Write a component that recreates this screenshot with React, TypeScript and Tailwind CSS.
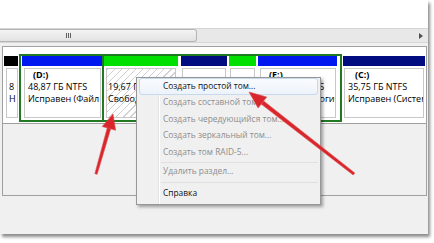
import React from "react";

const font = { fontFamily: '"Open Sans", "Noto Sans", sans-serif' };

function Bar({ color }: { color: string }) {
  return <div className={`h-[10px] ${color}`} />;
}

export default function App() {
  return (
    <div className="relative w-[434px] h-[243px] bg-white overflow-hidden text-[9px] text-black" style={font}>
      {/* window frame */}
      <div className="flex flex-col w-[428px] h-[234px] bg-[#f0f0f0] shadow-[2px_3px_3px_rgba(0,0,0,0.45)]">
        <div className="h-[28px] bg-white" />
        {/* scrollbar */}
        <div className="h-[15px] flex items-center bg-[#e8e8e8] border-y border-[#d6d6d6]">
          <div className="h-[13px] w-[197px] bg-gradient-to-b from-[#f4f4f4] to-[#e2e2e2] border border-l-0 border-[#b4b4b4] rounded-r-[3px] flex items-center pl-[66px] gap-[1px]">
            <div className="w-[1px] h-[5px] bg-[#606060]" />
            <div className="w-[1px] h-[5px] bg-[#606060]" />
            <div className="w-[1px] h-[5px] bg-[#606060]" />
          </div>
          <div className="flex-1" />
          <div className="w-0 h-0 border-y-[3px] border-y-transparent border-l-[4px] border-l-[#505050] mr-[5px]" />
        </div>
        <div className="h-[3px]" />
        {/* panel */}
        <div className="ml-[2px] w-[425px] h-[150px] border border-[#a0a0a0] flex flex-col">
          <div className="h-[77px] bg-white flex items-start pt-[7px] border-b border-[#a0a0a0]">
            {/* disk label column */}
            <div className="ml-[1px] w-[14px] pt-[2px] flex flex-col gap-[2px]">
              <Bar color="bg-black" />
              <div className="ml-[2px] h-[50px] border border-[#c8c8c8] bg-white pl-[2px] pt-[12px] leading-[12px] overflow-hidden">
                <div>8</div>
                <div>Н</div>
              </div>
            </div>
            {/* extended partition */}
            <div className="ml-[1px] w-[323px] h-[68px] border-2 border-[#217a21] flex">
              {/* D */}
              <div className="w-[81px] flex flex-col gap-[2px] pl-[1px]">
                <Bar color="bg-[#0018f0]" />
                <div className="ml-[2px] mr-[1px] h-[50px] border border-[#c8c8c8] bg-white pl-[3px] leading-[12px] whitespace-nowrap overflow-hidden">
                  <div className="pl-[5px] font-bold">(D:)</div>
                  <div>48,87 ГБ NTFS</div>
                  <div>Исправен (Файл и</div>
                </div>
              </div>
              <div className="w-[2px] h-full bg-[#217a21]" />
              {/* free */}
              <div className="w-[75px] flex flex-col gap-[2px]">
                <div className="h-[10px] w-[74px] bg-[#00e000]" />
                <div className="ml-[2px] w-[70px] h-[50px] border border-[#c8c8c8] bg-[repeating-linear-gradient(135deg,#cfcfcf_0px,#cfcfcf_1px,#ffffff_1px,#ffffff_5px)] pl-[1px] pt-[12px] leading-[12px] whitespace-nowrap overflow-hidden">
                  <div>19,67 ГБ</div>
                  <div>Свободно</div>
                </div>
              </div>
              {/* navy */}
              <div className="w-[49px] flex flex-col gap-[2px] pl-[2px]">
                <div className="h-[10px] w-[46px] bg-[#000c80]" />
                <div className="ml-[1px] w-[44px] h-[50px] border border-[#c8c8c8] bg-white" />
              </div>
              {/* small green */}
              <div className="w-[29px] flex flex-col gap-[2px] pl-[1px]">
                <div className="h-[10px] w-[27px] bg-[#00e000]" />
                <div className="ml-[1px] w-[25px] h-[50px] border border-[#c8c8c8] bg-white" />
              </div>
              {/* E */}
              <div className="flex-1 flex flex-col gap-[2px] pl-[1px]">
                <div className="h-[10px] w-[79px] bg-[#0018f0]" />
                <div className="ml-[2px] w-[76px] h-[50px] border border-[#c8c8c8] bg-white pl-[4px] leading-[12px] whitespace-nowrap overflow-hidden">
                  <div className="pl-[4px] font-bold">(E:)</div>
                  <div>76,91 ГБ NTFS</div>
                  <div>Исправен (Логич</div>
                </div>
              </div>
            </div>
            {/* C */}
            <div className="ml-[1px] w-[82px] pt-[2px] flex flex-col gap-[2px]">
              <Bar color="bg-[#000c80]" />
              <div className="ml-[1px] w-[80px] h-[50px] border border-[#c8c8c8] bg-white pl-[3px] leading-[12px] whitespace-nowrap overflow-hidden">
                <div className="pl-[7px] font-bold">(C:)</div>
                <div>35,75 ГБ NTFS</div>
                <div>Исправен (Система</div>
              </div>
            </div>
          </div>
          <div className="flex-1 bg-[#f0f0f0]" />
        </div>
      </div>

      {/* context menu */}
      <div className="absolute left-[136px] top-[77px] w-[185px] h-[128px] bg-[#f0f0f0] border border-[#979797] shadow-[2px_2px_3px_rgba(0,0,0,0.35)] px-[2px] flex flex-col text-[8.4px]">
        <div className="absolute left-[21px] top-0 bottom-0 w-[1px] bg-[#e2e3e3]" />
        <div className="absolute left-[22px] top-0 bottom-0 w-[1px] bg-white" />
        <div className="relative h-[16.5px] flex items-center pl-[23px] rounded-[3px] border border-[#c5d9ef] bg-gradient-to-b from-[#f9fbfe] to-[#edf3fb] text-[#111]">
          Создать простой том...
        </div>
        <div className="relative h-[16.5px] flex items-center pl-[24px] text-[#8d8d8d]">Создать составной том...</div>
        <div className="relative h-[16.5px] flex items-center pl-[24px] text-[#8d8d8d]">Создать чередующийся том...</div>
        <div className="relative h-[16.5px] flex items-center pl-[24px] text-[#8d8d8d]">Создать зеркальный том...</div>
        <div className="relative h-[16.5px] flex items-center pl-[24px] text-[#8d8d8d]">Создать том RAID-5...</div>
        <div className="relative h-[3px] pl-[22px] flex items-center">
          <div className="h-[1px] w-full bg-[#e0e0e0]" />
        </div>
        <div className="relative h-[16.5px] flex items-center pl-[24px] text-[#8d8d8d]">Удалить раздел...</div>
        <div className="relative h-[5px] pl-[22px] flex items-center">
          <div className="h-[1px] w-full bg-[#e0e0e0]" />
        </div>
        <div className="relative h-[16px] flex items-center pl-[24px] text-[#111]">Справка</div>
      </div>

      {/* red arrows */}
      <svg className="absolute left-0 top-0 pointer-events-none" width="434" height="243" viewBox="0 0 434 243">
        <g fill="#d8262c" stroke="#e04a4e" strokeWidth="0.6" strokeLinejoin="round">
          <polygon points="94.85,173.67 97.15,174.33 110.93,127.99 107.47,127.01" />
          <polygon points="113,114 115.6,130.3 102.2,126.5" />
          <polygon points="354.8,173 353.2,175 261.2,104.1 263.6,100.9" />
          <polygon points="249,92 266.7,97 258.1,108" />
        </g>
      </svg>
    </div>
  );
}
